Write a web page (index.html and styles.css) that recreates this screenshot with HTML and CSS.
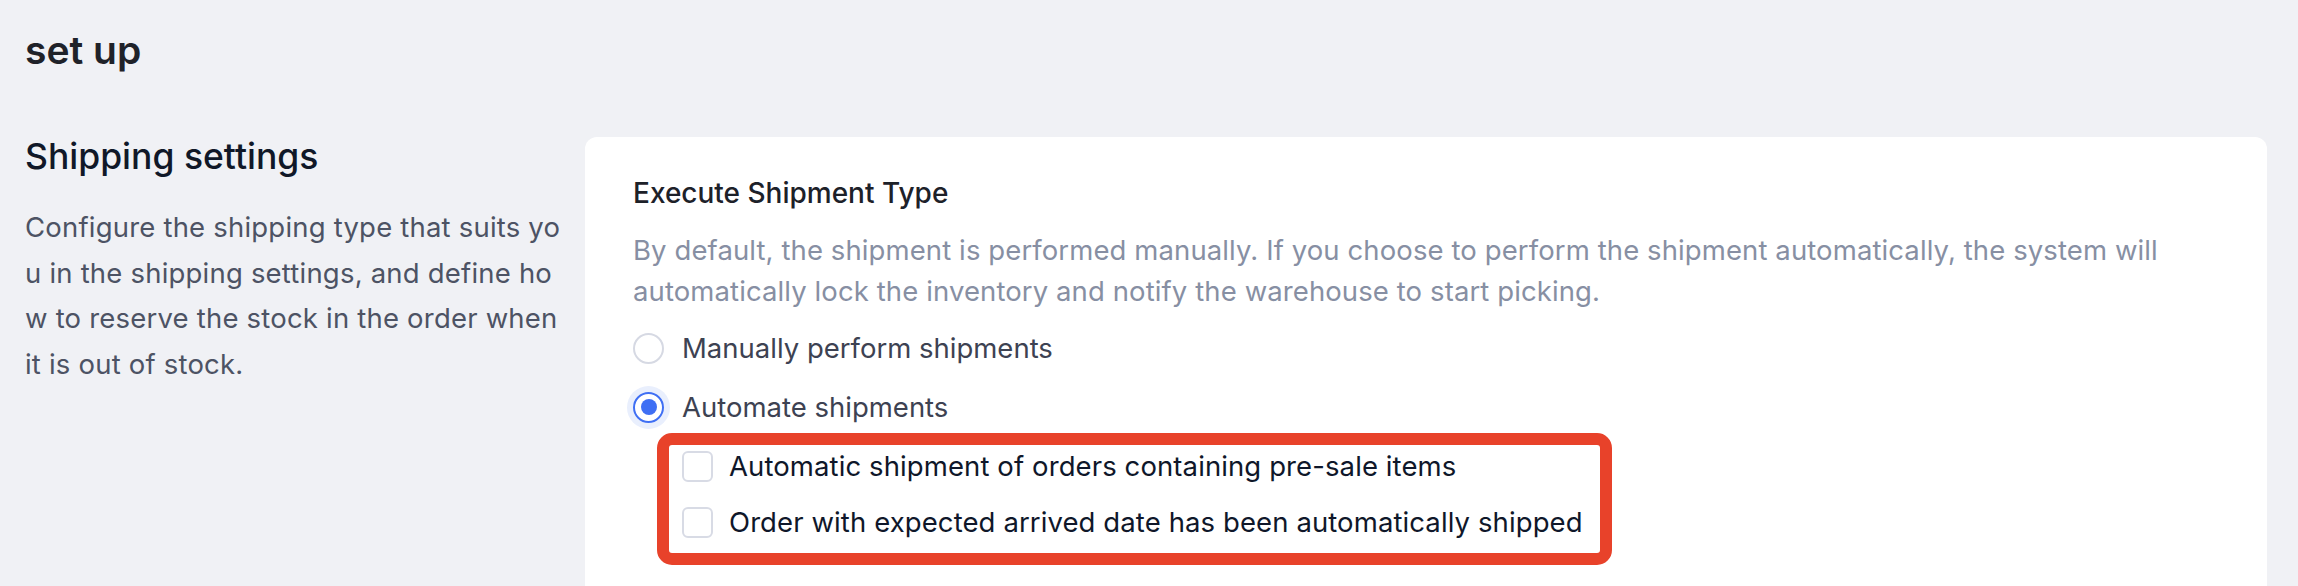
FILE: index.html
```html
<!DOCTYPE html>
<html lang="en">
<head>
    <meta charset="UTF-8">
    <meta name="viewport" content="width=device-width, initial-scale=1.0">
    <title>Set up</title>
    <link rel="stylesheet" href="styles.css">
</head>
<body>
    <div class="page">
        <h1 class="page-title">set up</h1>
        <div class="section">
            <div class="section-info">
                <h2>Shipping settings</h2>
                <p>Configure the shipping type that suits you in the shipping settings, and define how to reserve the stock in the order when it is out of stock.</p>
            </div>
            <div class="card">
                <div class="field-title">Execute Shipment Type</div>
                <p class="field-desc">By default, the shipment is performed manually. If you choose to perform the shipment automatically, the system will automatically lock the inventory and notify the warehouse to start picking.</p>
                <div class="radio-group">
                    <label class="radio"><span class="radio-circle"></span>Manually perform shipments</label>
                    <label class="radio checked"><span class="radio-circle"></span>Automate shipments</label>
                </div>
                <div class="highlight">
                    <label class="checkbox"><span class="box"></span>Automatic shipment of orders containing pre-sale items</label>
                    <label class="checkbox"><span class="box"></span>Order with expected arrived date has been automatically shipped</label>
                </div>
            </div>
        </div>
    </div>
</body>
</html>
```

FILE: styles.css
```css
html, body {
    overflow: hidden;
}
body {
    margin: 0;
    background-color: #f0f1f5;
    font-family: Inter, "Liberation Sans", sans-serif;
    color: #1f2229;
}
.page {
    padding: 24px 31px 0 25px;
}
.page-title {
    margin: 0;
    font-size: 39px;
    font-weight: 600;
    line-height: 52px;
    color: #1f2229;
}
.section {
    display: flex;
    align-items: flex-start;
    margin-top: 61px;
}
.section-info {
    width: 542px;
    margin-right: 18px;
    flex-shrink: 0;
}
.section-info h2 {
    margin: 0;
    font-size: 35.5px;
    font-weight: 500;
    line-height: 40px;
    color: #101828;
}
.section-info p {
    margin: 28px 0 0;
    font-size: 27.5px;
    letter-spacing: 0.2px;
    line-height: 45.5px;
    color: #4d5364;
    word-break: break-all;
}
.card {
    flex: 1;
    background: #fff;
    border-radius: 12px;
    padding: 36px 48px 80px;
}
.field-title {
    font-size: 28px;
    font-weight: 500;
    line-height: 40px;
    color: #1d2129;
}
.field-desc {
    margin: 17px 0 0;
    font-size: 27.5px;
    letter-spacing: 0.1px;
    line-height: 41px;
    color: #878fa3;
}
.radio-group {
    margin-top: 14px;
    display: flex;
    flex-direction: column;
    gap: 15px;
}
.radio, .checkbox {
    display: flex;
    align-items: center;
    font-size: 27.5px;
}
.radio {
    height: 44px;
    color: #3d4252;
}
.checkbox {
    height: 40px;
    color: #0f172a;
    letter-spacing: 0.1px;
}
.radio-circle {
    width: 31px;
    height: 31px;
    box-sizing: border-box;
    border: 2px solid #d6d9e3;
    border-radius: 50%;
    margin-right: 18px;
    display: flex;
    align-items: center;
    justify-content: center;
}
.radio.checked .radio-circle {
    border-color: #3f6ff4;
    box-shadow: 0 0 0 6px #e9effd;
}
.radio.checked .radio-circle::after {
    content: "";
    width: 16px;
    height: 16px;
    border-radius: 50%;
    background: #3f6ff4;
}
.highlight {
    width: 955px;
    box-sizing: border-box;
    margin: 4px 0 0 24px;
    padding: 1px 0 11px 13px;
    border: 12px solid #e8422a;
    border-radius: 15px;
    display: flex;
    flex-direction: column;
    gap: 16px;
}
.box {
    width: 31px;
    height: 31px;
    box-sizing: border-box;
    border: 2px solid #d8dbe5;
    border-radius: 6px;
    margin-right: 16px;
}
```
